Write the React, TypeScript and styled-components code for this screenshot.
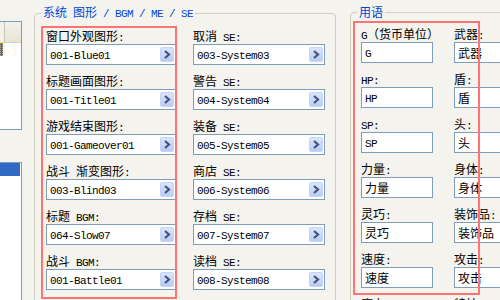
import styled, { createGlobalStyle } from "styled-components";

const GlobalStyle = createGlobalStyle`
  body {
    margin: 0;
    background: #f4f3ee;
    font-family: "Noto Sans CJK SC", "DejaVu Sans", sans-serif;
    font-size: 12px;
    color: #000;
  }
  #root {
    width: 500px;
    height: 300px;
    overflow: hidden;
  }
`;

const graphics: { label: string; value: string }[] = [
  { label: "窗口外观图形:", value: "001-Blue01" },
  { label: "标题画面图形:", value: "001-Title01" },
  { label: "游戏结束图形:", value: "001-Gameover01" },
  { label: "战斗 渐变图形:", value: "003-Blind03" },
  { label: "标题 BGM:", value: "064-Slow07" },
  { label: "战斗 BGM:", value: "001-Battle01" },
  { label: "战斗结束 ME:", value: "001-Victory01" },
];

const sounds: { label: string; value: string }[] = [
  { label: "取消 SE:", value: "003-System03" },
  { label: "警告 SE:", value: "004-System04" },
  { label: "装备 SE:", value: "005-System05" },
  { label: "商店 SE:", value: "006-System06" },
  { label: "存档 SE:", value: "007-System07" },
  { label: "读档 SE:", value: "008-System08" },
  { label: "战斗开始 SE:", value: "009-System09" },
];

const termsLeft: { label: string; value: string }[] = [
  { label: "G（货币单位）", value: "G" },
  { label: "HP:", value: "HP" },
  { label: "SP:", value: "SP" },
  { label: "力量:", value: "力量" },
  { label: "灵巧:", value: "灵巧" },
  { label: "速度:", value: "速度" },
  { label: "魔力:", value: "魔力" },
];

const termsRight: { label: string; value: string }[] = [
  { label: "武器:", value: "武器" },
  { label: "盾:", value: "盾" },
  { label: "头:", value: "头" },
  { label: "身体:", value: "身体" },
  { label: "装饰品:", value: "装饰品" },
  { label: "攻击:", value: "攻击" },
  { label: "特技:", value: "特技" },
];

// latin runs use the narrow monospace, the rest stays in the CJK font
const Mixed = ({ text }: { text: string }) => (
  <>
    {text.split(/([\x20-\x7e]+)/).map((part, i) =>
      part === "" ? null : /^[\x20-\x7e]+$/.test(part) ? (
        <Lat key={i}>{part}</Lat>
      ) : (
        <span key={i}>{part}</span>
      )
    )}
  </>
);

const ComboField = ({ value }: { value: string }) => (
  <Combo>
    <FieldText>
      <Mixed text={value} />
    </FieldText>
    <ComboButton>
      <svg width="14" height="15" viewBox="0 0 14 15">
        <path d="M5 4 L9 7.5 L5 11" stroke="#43557a" strokeWidth="2.2" fill="none" />
      </svg>
    </ComboButton>
  </Combo>
);

const App = () => {
  return (
    <>
      <GlobalStyle />
      <Screen>
        <LeftPane>
          <ListBox $top={21} $height={109}>
            <ListHeader />
            <SelectedStrip $dotted />
          </ListBox>
          <ListBox $top={32} $height={200}>
            <SelectedStrip />
          </ListBox>
        </LeftPane>

        <GroupBox $width={302}>
          <Legend>
            <Mixed text="系统 图形 / BGM / ME / SE" />
          </Legend>
          <Columns $gap={17} $padLeft={11}>
            <Column>
              {graphics.map((item) => (
                <Item key={item.label}>
                  <Label>
                    <Mixed text={item.label} />
                  </Label>
                  <FieldBox $width={130}>
                    <ComboField value={item.value} />
                  </FieldBox>
                </Item>
              ))}
            </Column>
            <Column>
              {sounds.map((item) => (
                <Item key={item.label}>
                  <Label>
                    <Mixed text={item.label} />
                  </Label>
                  <FieldBox $width={132}>
                    <ComboField value={item.value} />
                  </FieldBox>
                </Item>
              ))}
            </Column>
          </Columns>
        </GroupBox>

        <GroupBox $width={200} $gapLeft={14}>
          <Legend>用语</Legend>
          <Columns $gap={15} $padLeft={10}>
            {[termsLeft, termsRight].map((list, ci) => (
              <Column key={ci}>
                {list.map((item) => (
                  <Item key={item.label}>
                    <Label>
                      <Mixed text={item.label} />
                    </Label>
                    <FieldBox $width={72}>
                      <TextField>
                        <FieldText>
                          <Mixed text={item.value} />
                        </FieldText>
                      </TextField>
                    </FieldBox>
                  </Item>
                ))}
              </Column>
            ))}
          </Columns>
        </GroupBox>

        <Marker $left={41} $top={26} $width={136} $height={273} />
        <Marker $left={353} $top={21} $width={127} $height={274} />
      </Screen>
    </>
  );
};

export default App;

const Screen = styled.div`
  position: relative;
  display: flex;
  align-items: flex-start;
  width: 500px;
  height: 300px;
  overflow: hidden;
`;

const LeftPane = styled.div`
  display: flex;
  flex-direction: column;
  width: 22px;
  margin-right: 12px;
  flex-shrink: 0;
`;

const ListBox = styled.div<{ $top: number; $height: number }>`
  margin-top: ${(p) => p.$top}px;
  height: ${(p) => p.$height}px;
  box-sizing: border-box;
  border: 1px solid #7f9db9;
  border-left: none;
  background: #fff;
  overflow: hidden;
`;

const ListHeader = styled.div`
  height: 20px;
  background: linear-gradient(#f3f2ea, #e6e4d6);
  border-bottom: 1px solid #d6d2c2;
  box-shadow: inset 4px 0 0 #f3f2ea, inset 5px 0 0 #c9c6b4;
`;

const SelectedStrip = styled.div<{ $dotted?: boolean }>`
  width: ${(p) => (p.$dotted ? 3 : 20)}px;
  height: 13px;
  background: #316ac5;
  box-sizing: border-box;
  border: ${(p) => (p.$dotted ? "1px dotted #e9a23b" : "none")};
`;

const GroupBox = styled.fieldset<{ $width: number; $gapLeft?: number }>`
  flex-shrink: 0;
  box-sizing: border-box;
  width: ${(p) => p.$width}px;
  height: 330px;
  margin: 4px 0 0 ${(p) => p.$gapLeft ?? 0}px;
  padding: 6px 0 0;
  border: 1px solid #d0d0bf;
  border-radius: 4px;
  min-inline-size: 0;
`;

const Legend = styled.legend`
  margin-left: 6px;
  padding: 0 2px;
  line-height: 16px;
  color: #0046d5;
`;

const Columns = styled.div<{ $gap: number; $padLeft: number }>`
  display: flex;
  gap: ${(p) => p.$gap}px;
  padding-left: ${(p) => p.$padLeft}px;
`;

const Column = styled.div`
  display: flex;
  flex-direction: column;
  flex-shrink: 0;
`;

const Item = styled.div`
  display: flex;
  flex-direction: column;
  margin-bottom: 8px;
`;

const Label = styled.div`
  height: 16px;
  line-height: 16px;
  white-space: nowrap;
`;

const Lat = styled.span`
  font-family: "Liberation Mono", "DejaVu Sans Mono", monospace;
  font-size: 11px;
  letter-spacing: -0.6px;
`;

const FieldBox = styled.div<{ $width: number }>`
  width: ${(p) => p.$width}px;
`;

const Combo = styled.div`
  display: flex;
  align-items: center;
  justify-content: space-between;
  box-sizing: border-box;
  height: 21px;
  padding: 0 1px 0 3px;
  border: 1px solid #7f9db9;
  background: #fff;
`;

const TextField = styled.div`
  display: flex;
  align-items: center;
  box-sizing: border-box;
  height: 21px;
  padding: 0 3px;
  border: 1px solid #7f9db9;
  background: #fff;
`;

const FieldText = styled.span`
  white-space: nowrap;
  line-height: 16px;
`;

const ComboButton = styled.span`
  display: flex;
  width: 14px;
  height: 15px;
  box-sizing: border-box;
  border: 1px solid #c6d4f5;
  border-radius: 2px;
  background: linear-gradient(#dbe5fd, #b9cbf5);
  svg {
    display: block;
    margin: -1px;
  }
`;

const Marker = styled.div<{ $left: number; $top: number; $width: number; $height: number }>`
  position: absolute;
  left: ${(p) => p.$left}px;
  top: ${(p) => p.$top}px;
  width: ${(p) => p.$width}px;
  height: ${(p) => p.$height}px;
  box-sizing: border-box;
  border: 2px solid #ff7373;
  pointer-events: none;
`;
